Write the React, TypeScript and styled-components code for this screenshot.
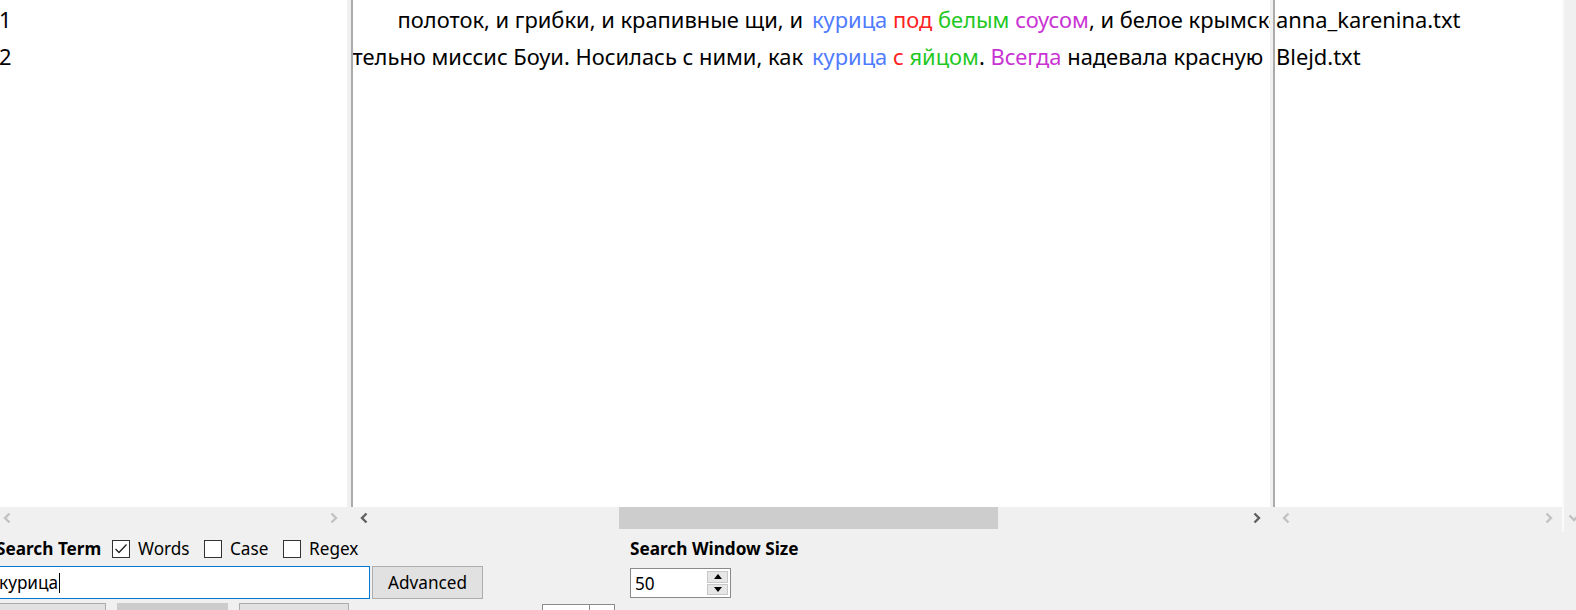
import React from "react";
import styled, { createGlobalStyle } from "styled-components";

const GlobalStyle = createGlobalStyle`
  html, body { margin: 0; padding: 0; background: #f0f0f0; overflow: hidden; }
  body { font-family: "Noto Sans", "Open Sans", sans-serif; color: #000; }
  * { box-sizing: border-box; }
`;

const Window = styled.div`
  width: 1590px;
  height: 610px;
  margin-left: -6px;
  display: flex;
  flex-direction: column;
  background: #f0f0f0;
  overflow: hidden;
`;

const TopArea = styled.div`
  display: flex;
  height: 532px;
  flex: none;
`;

const Column = styled.div<{ $w: number }>`
  width: ${(p) => p.$w}px;
  flex: none;
  display: flex;
  flex-direction: column;
`;

const Splitter = styled.div<{ $w: number }>`
  width: ${(p) => p.$w}px;
  flex: none;
  background: #f0f0f0;
`;

const Body = styled.div<{ $line?: boolean }>`
  height: 507px;
  flex: none;
  background: #fff;
  overflow: hidden;
  padding-top: 1px;
  border-left: ${(p) => (p.$line ? "2px solid #ababab" : "none")};
  font-size: 21.9px;
`;

const Row = styled.div<{ $pad?: number }>`
  height: 37px;
  line-height: 37px;
  white-space: nowrap;
  overflow: hidden;
  padding-left: ${(p) => p.$pad ?? 0}px;
`;

const KwicRow = styled.div`
  height: 37px;
  line-height: 37px;
  display: flex;
  white-space: nowrap;
`;

const LeftCtx = styled.div`
  width: 450px;
  flex: none;
  display: flex;
  justify-content: flex-end;
  overflow: hidden;
`;

const RightCtx = styled.div`
  flex: 1;
  margin-left: 9px;
  overflow: hidden;
`;

const Hit = styled.span<{ $c: string }>`
  color: ${(p) => p.$c};
`;

const HScroll = styled.div`
  height: 22px;
  flex: none;
  display: flex;
  align-items: stretch;
`;

const ArrowBtn = styled.div`
  width: 26px;
  flex: none;
  display: flex;
  align-items: center;
  justify-content: center;
`;

const Track = styled.div`
  flex: 1;
  position: relative;
`;

const Thumb = styled.div`
  position: absolute;
  top: 0;
  bottom: 0;
  background: #cdcdcd;
`;

const VScroll = styled.div`
  width: 22px;
  flex: none;
  height: 532px;
  background: #f0f0f0;
  border-left: 2px solid #fafafa;
  display: flex;
  flex-direction: column;
  justify-content: flex-end;
  padding-bottom: 3px;
`;

const VArrow = styled.div`
  height: 22px;
  display: flex;
  align-items: center;
  justify-content: center;
`;

/* ---------- controls ---------- */

const Controls = styled.div`
  display: flex;
  flex-direction: column;
  padding-top: 5px;
  font-size: 17.2px;
`;

const CtrlRow = styled.div<{ $h: number; $mt?: number }>`
  display: flex;
  align-items: flex-start;
  height: ${(p) => p.$h}px;
  margin-top: ${(p) => p.$mt ?? 0}px;
  flex: none;
`;

const LeftBlock = styled.div`
  width: 489px;
  flex: none;
  display: flex;
  align-items: center;
  height: 100%;
`;

const RightBlock = styled.div`
  margin-left: 147px;
  display: flex;
  align-items: center;
  height: 100%;
`;

const BoldLabel = styled.div<{ $w?: number; $pl?: number }>`
  font-weight: 700;
  white-space: nowrap;
  width: ${(p) => (p.$w ? `${p.$w}px` : "auto")};
  padding-left: ${(p) => p.$pl ?? 0}px;
  flex: none;
`;

const CheckOption = styled.label<{ $w: number }>`
  width: ${(p) => p.$w}px;
  flex: none;
  display: flex;
  align-items: center;
  gap: 8px;
  white-space: nowrap;
`;

const Box = styled.span`
  width: 18px;
  height: 18px;
  border: 1px solid #333;
  background: #fff;
  display: flex;
  align-items: center;
  justify-content: center;
  flex: none;
`;

const TextInput = styled.div`
  width: 375px;
  height: 33px;
  margin-left: 1px;
  border: 1px solid #0078d7;
  background: #fff;
  display: flex;
  align-items: center;
  padding-left: 3px;
  flex: none;
`;

const Caret = styled.span`
  display: inline-block;
  width: 1px;
  height: 20px;
  background: #000;
  margin-left: 1px;
`;

const Button = styled.div<{ $w: number; $ml?: number; $pressed?: boolean }>`
  width: ${(p) => p.$w}px;
  height: 33px;
  margin-left: ${(p) => p.$ml ?? 0}px;
  flex: none;
  background: ${(p) => (p.$pressed ? "#cccccc" : "#e1e1e1")};
  border: 1px solid ${(p) => (p.$pressed ? "#cccccc" : "#adadad")};
  display: flex;
  align-items: center;
  justify-content: center;
`;

const Spin = styled.div<{ $w: number; $h: number; $ml?: number; $mt?: number }>`
  width: ${(p) => p.$w}px;
  height: ${(p) => p.$h}px;
  margin-left: ${(p) => p.$ml ?? 0}px;
  margin-top: ${(p) => p.$mt ?? 0}px;
  border: 1px solid #8a8a8a;
  background: #fff;
  display: flex;
  flex: none;
`;

const SpinValue = styled.div`
  flex: 1;
  display: flex;
  align-items: center;
  padding-left: 4px;
`;

const SpinButtons = styled.div`
  width: 23px;
  display: flex;
  flex-direction: column;
  gap: 1px;
  padding: 2px 2px 2px 0;
  flex: none;
`;

const SpinBtn = styled.div`
  flex: 1;
  background: #e6e6e6;
  border: 1px solid #c8c8c8;
  display: flex;
  align-items: center;
  justify-content: center;
`;

const SpinDivider = styled.div`
  width: 25px;
  border-left: 1px solid #8a8a8a;
  flex: none;
`;

/* ---------- icons ---------- */

const Chevron = ({ dir, color }: { dir: "left" | "right" | "down"; color: string }) => {
  const d =
    dir === "left" ? "M6.5 1.5 L2 6 L6.5 10.5" : dir === "right" ? "M1.5 1.5 L6 6 L1.5 10.5" : "M1.5 1.5 L6 6 L10.5 1.5";
  const w = dir === "down" ? 12 : 8;
  const h = dir === "down" ? 8 : 12;
  return (
    <svg width={w} height={h} viewBox={`0 0 ${w} ${h}`}>
      <path d={d} fill="none" stroke={color} strokeWidth={2.4} />
    </svg>
  );
};

const Tri = ({ up }: { up: boolean }) => (
  <svg width="8" height="5" viewBox="0 0 8 5">
    <path d={up ? "M0 5 L4 0 L8 5 Z" : "M0 0 L4 5 L8 0 Z"} fill="#000" />
  </svg>
);

const Check = () => (
  <svg width="14" height="12" viewBox="0 0 14 12">
    <path d="M1.5 6 L5 9.5 L12.5 1.5" fill="none" stroke="#222" strokeWidth={1.3} />
  </svg>
);

/* ---------- data ---------- */

const BLUE = "#4f7bff";
const RED = "#ff2222";
const GREEN = "#1fc81f";
const MAGENTA = "#c933d3";

type Part = { t: string; c?: string };

const rows: { n: number; left: string; right: Part[]; file: string }[] = [
  {
    n: 1,
    left: "полоток, и грибки, и крапивные щи, и",
    right: [
      { t: "курица", c: BLUE },
      { t: " " },
      { t: "под", c: RED },
      { t: " " },
      { t: "белым", c: GREEN },
      { t: " " },
      { t: "соусом", c: MAGENTA },
      { t: ", и белое крымское" },
    ],
    file: "anna_karenina.txt",
  },
  {
    n: 2,
    left: "предпочтительно миссис Боуи. Носилась с ними, как",
    right: [
      { t: "курица", c: BLUE },
      { t: " " },
      { t: "с", c: RED },
      { t: " " },
      { t: "яйцом", c: GREEN },
      { t: ". " },
      { t: "Всегда", c: MAGENTA },
      { t: " надевала красную" },
    ],
    file: "Blejd.txt",
  },
];

const ScrollBar = ({
  active,
  thumb,
}: {
  active: boolean;
  thumb?: { start: number; size: number };
}) => {
  const c = active ? "#606060" : "#c2c2c2";
  return (
    <HScroll>
      <ArrowBtn>
        <Chevron dir="left" color={c} />
      </ArrowBtn>
      <Track>
        {thumb && (
          <Thumb style={{ left: `${thumb.start * 100}%`, width: `${thumb.size * 100}%` }} />
        )}
      </Track>
      <ArrowBtn>
        <Chevron dir="right" color={c} />
      </ArrowBtn>
    </HScroll>
  );
};

export default function App() {
  const trackLen = 919 - 52;
  const thumb = { start: 242 / trackLen, size: 379 / trackLen };
  return (
    <>
      <GlobalStyle />
      <Window>
        <TopArea>
          <Column $w={353}>
            <Body>
              {rows.map((r) => (
                <Row key={r.n} $pad={5}>
                  {r.n}
                </Row>
              ))}
            </Body>
            <ScrollBar active={false} />
          </Column>
          <Splitter $w={4} />
          <Column $w={919}>
            <Body $line>
              {rows.map((r) => (
                <KwicRow key={r.n}>
                  <LeftCtx>{r.left}</LeftCtx>
                  <RightCtx>
                    {r.right.map((p, i) =>
                      p.c ? (
                        <Hit key={i} $c={p.c}>
                          {p.t}
                        </Hit>
                      ) : (
                        <span key={i}>{p.t}</span>
                      )
                    )}
                  </RightCtx>
                </KwicRow>
              ))}
            </Body>
            <ScrollBar active thumb={thumb} />
          </Column>
          <Splitter $w={3} />
          <Column $w={289}>
            <Body $line>
              {rows.map((r) => (
                <Row key={r.n} $pad={1}>
                  {r.file}
                </Row>
              ))}
            </Body>
            <ScrollBar active={false} />
          </Column>
          <VScroll>
            <VArrow>
              <Chevron dir="down" color="#c2c2c2" />
            </VArrow>
          </VScroll>
        </TopArea>

        <Controls>
          <CtrlRow $h={23}>
            <LeftBlock>
              <BoldLabel $w={118} $pl={2}>
                Search Term
              </BoldLabel>
              <CheckOption $w={92}>
                <Box>
                  <Check />
                </Box>
                Words
              </CheckOption>
              <CheckOption $w={79}>
                <Box />
                Case
              </CheckOption>
              <CheckOption $w={80}>
                <Box />
                Regex
              </CheckOption>
            </LeftBlock>
            <RightBlock>
              <BoldLabel>Search Window Size</BoldLabel>
            </RightBlock>
          </CtrlRow>

          <CtrlRow $h={33} $mt={6}>
            <LeftBlock>
              <TextInput>
                курица
                <Caret />
              </TextInput>
              <Button $w={111} $ml={2}>
                Advanced
              </Button>
            </LeftBlock>
            <RightBlock>
              <Spin $w={101} $h={30} $mt={1}>
                <SpinValue>50</SpinValue>
                <SpinButtons>
                  <SpinBtn>
                    <Tri up />
                  </SpinBtn>
                  <SpinBtn>
                    <Tri up={false} />
                  </SpinBtn>
                </SpinButtons>
              </Spin>
            </RightBlock>
          </CtrlRow>

          <CtrlRow $h={33} $mt={4}>
            <Button $w={111} $ml={1} />
            <Button $w={111} $ml={11} $pressed />
            <Button $w={110} $ml={11} />
            <Spin $w={73} $h={30} $ml={193} $mt={1}>
              <SpinValue />
              <SpinDivider />
            </Spin>
          </CtrlRow>
        </Controls>
      </Window>
    </>
  );
}
